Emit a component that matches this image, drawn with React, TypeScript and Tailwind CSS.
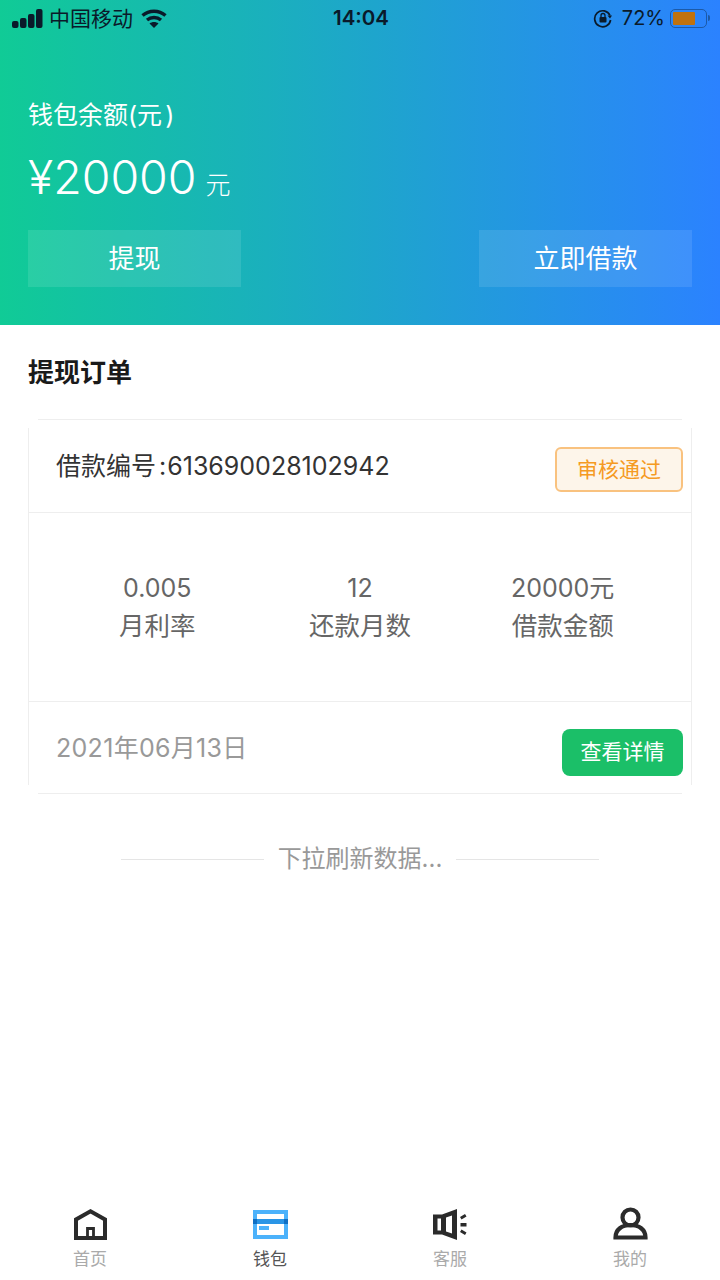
import React from 'react';

const font = "font-['Inter','Noto_Sans_CJK_SC',sans-serif]";

const StatusBar = () => (
  <div className="flex h-9 items-center justify-between pl-3 pr-[10px] text-[20px] leading-none text-[#0a1a2a]">
    <div className="flex w-[170px] items-center">
      {/* signal */}
      <svg width="31" height="19" viewBox="0 0 31 19" fill="#0a1a2a">
        <rect x="0" y="12" width="6.500" height="7" rx="2" />
        <rect x="8" y="9" width="6.500" height="10" rx="2" />
        <rect x="16" y="5" width="6.500" height="14" rx="2" />
        <rect x="24" y="0" width="6.500" height="19" rx="2" />
      </svg>
      <span className="ml-[6px] text-[21px]">中国移动</span>
      <svg className="ml-[8px]" width="26" height="19" viewBox="0 0 26 19" fill="none" stroke="#0a1a2a" strokeWidth="3.400">
        <path d="M1.500 6.500C8 .8 18 .8 24.500 6.500" />
        <path d="M6 11c4-3.400 10-3.400 14 0" />
        <path d="M13 19l-4.500-4.500c2.500-2 6.500-2 9 0z" fill="#0a1a2a" stroke="none" />
      </svg>
    </div>
    <span className="text-[20.500px] font-semibold">14:04</span>
    <div className="flex w-[170px] items-center justify-end">
      <svg width="20" height="20" viewBox="0 0 20 20" fill="none" stroke="#0a1a2a" strokeWidth="1.700">
        <path d="M17 7.500A8 8 0 1 0 17.600 12" />
        <path d="M14.500 7.500h4.500l-2 3z" fill="#0a1a2a" stroke="none" />
        <rect x="6.500" y="9" width="7" height="5.500" rx="1" fill="#0a1a2a" stroke="none" />
        <path d="M8 9V7.500a2 2 0 0 1 4 0V9" strokeWidth="1.300" />
      </svg>
      <span className="ml-[9px] text-[20px]">72%</span>
      <div className="ml-[5px] flex h-[19px] w-[37px] items-center rounded-[5px] border border-[#1c5aa8] p-[2px]">
        <div className="h-full w-[22px] rounded-[1px] bg-[#c0720e]" />
      </div>
      <div className="ml-[1px] h-[6px] w-[2px] rounded-r bg-[#1c5aa8]" />
    </div>
  </div>
);

const Stat = ({ value, label }: { value: string; label: string }) => (
  <div className="flex flex-col items-center leading-[38px] text-[#666666]">
    <span className="text-[25px]">{value}</span>
    <span className="text-[25.500px]">{label}</span>
  </div>
);

const Tab = ({ label, active, children }: { label: string; active?: boolean; children: React.ReactNode }) => (
  <div className="flex flex-col items-center">
    <div className="flex h-[33px] items-end">{children}</div>
    <span className={`mt-[7px] text-[17px] leading-[24px] ${active ? 'text-[#555555]' : 'text-[#aaaaaa]'}`}>{label}</span>
  </div>
);

const App = () => {
  return (
    <div className={`flex h-[1280px] w-[720px] flex-col bg-white ${font}`}>
      <header className="h-[325px] bg-linear-to-r/srgb from-[#10cb96] to-[#2b82ff]">
        <StatusBar />
        <div className="px-7">
          <p className="mt-[61px] text-[25px] leading-9 text-white">
            钱包余额(元<span className="ml-[3px]">)</span>
          </p>
          <div className="mt-[12px] flex items-baseline text-white">
            <span className="text-[46.500px] font-light leading-[64px]">¥20000</span>
            <span className="ml-[9px] text-[25px] font-light">元</span>
          </div>
          <div className="mt-[21px] flex justify-between">
            <button className="h-[57px] w-[213px] bg-white/10 text-[26px] text-white">提现</button>
            <button className="h-[57px] w-[213px] bg-white/10 text-[26px] text-white">立即借款</button>
          </div>
        </div>
      </header>

      <main className="flex-1 px-7">
        <h2 className="mt-[30px] text-[26px] font-bold leading-9 text-[#1a1a1a]">提现订单</h2>

        {/* order card */}
        <div className="relative mt-[28px]">
          <div className="absolute bottom-[9px] left-0 top-[9px] w-px bg-[#eeeeee]" />
          <div className="absolute bottom-[9px] right-0 top-[9px] w-px bg-[#eeeeee]" />
          <div className="mx-[10px] h-px bg-[#eeeeee]" />
          <div className="flex h-[93px] items-center justify-between border-b border-[#eeeeee] pl-7 pr-[9px]">
            <span className="pt-[2px] text-[25px] text-[#333333]">
              借款编号<span className="ml-[3px]">:</span><span className="ml-[1px]">613690028102942</span>
            </span>
            <span className="mt-[7px] flex h-[45px] w-[128px] items-center justify-center rounded-[6px] border-2 border-[#f9c27f] bg-[#fdf5ea] text-[21px] text-[#f59a23]">
              审核通过
            </span>
          </div>
          <div className="grid h-[189px] grid-cols-3 items-center border-b border-[#eeeeee] px-7">
            <Stat value="0.005" label="月利率" />
            <Stat value="12" label="还款月数" />
            <Stat value="20000元" label="借款金额" />
          </div>
          <div className="flex h-[91px] items-center justify-between pl-7 pr-[9px]">
            <span className="pt-[2px] text-[25px] tracking-[0.3px] text-[#999999]">2021年06月13日</span>
            <span className="mt-[9px] flex h-[47px] w-[121px] items-center justify-center rounded-[8px] bg-[#1bbf68] text-[21px] text-white">
              查看详情
            </span>
          </div>
          <div className="mx-[10px] h-px bg-[#eeeeee]" />
        </div>

        <div className="mt-[47px] flex items-center justify-center">
          <div className="h-px w-[143px] bg-[#e5e5e5]" />
          <span className="mx-[14px] text-[24px] leading-9 text-[#999999]">下拉刷新数据...</span>
          <div className="h-px w-[143px] bg-[#e5e5e5]" />
        </div>
      </main>

      <nav className="grid h-[85px] grid-cols-4 pt-[12px]">
        <Tab label="首页">
          <svg width="33" height="31" viewBox="0 0 33 31" fill="none" stroke="#2b2b2b" strokeWidth="4">
            <path d="M2 29V10.500L16.500 2.300 31 10.500V29z" />
            <path d="M13.500 29V19.500h6V29" strokeWidth="2.800" />
          </svg>
        </Tab>
        <Tab label="钱包" active>
          <svg width="35" height="29" viewBox="0 0 35 29" className="mb-[1px]">
            <rect width="35" height="29" fill="#4cb2fb" />
            <rect x="4" y="4" width="27" height="21" fill="#fff" />
            <rect y="9" width="35" height="5" fill="#2a95e6" />
            <rect y="9" width="4" height="5" fill="#0f6fc4" />
            <rect x="31" y="9" width="4" height="5" fill="#0f6fc4" />
            <rect x="6" y="16" width="10" height="4" fill="#4cb2fb" />
          </svg>
        </Tab>
        <Tab label="客服">
          <svg width="34" height="31" viewBox="0 0 34 31" fill="#2b2b2b">
            <path d="M0 5.500h9L24 0v31L9 25.500H0z" />
            <rect x="4.500" y="9.500" width="3.500" height="12" fill="#fff" />
            <path d="M13 8.500l6-2v18l-6-2z" fill="#fff" />
            <path d="M27 8l5-3 1.500 2.500-5 3zM27.500 14h6v3.500h-6zM27 23l5 3 1.500-2.500-5-3z" />
          </svg>
        </Tab>
        <Tab label="我的">
          <svg width="35" height="33" viewBox="0 0 35 33" fill="none" stroke="#2b2b2b" strokeWidth="4.200">
            <circle cx="17.500" cy="10.500" r="8" />
            <path d="M2.500 30.500c0-8 6.500-12.500 15-12.500s15 4.500 15 12.500z" />
          </svg>
        </Tab>
      </nav>
    </div>
  );
};

export default App;
